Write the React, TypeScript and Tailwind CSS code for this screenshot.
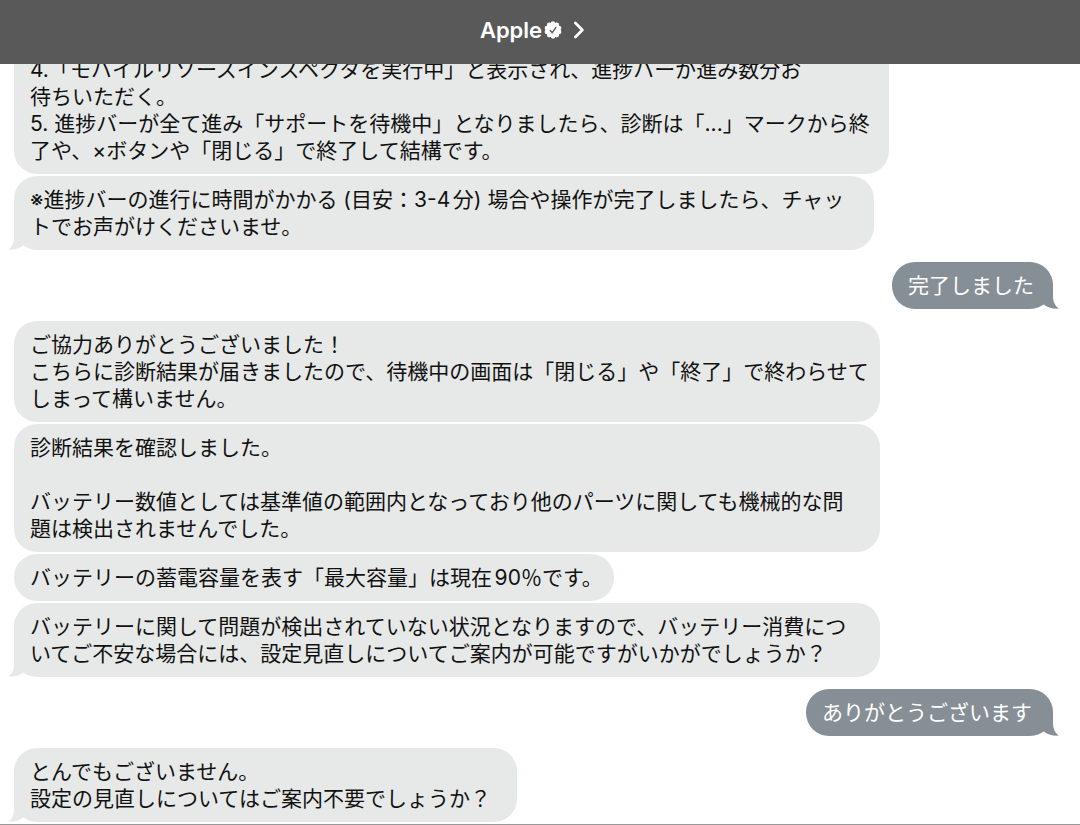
import { ReactNode } from "react";

type Message = {
  from: "apple" | "me";
  lines: string[];
  width: string;
  tail?: boolean;
  continued?: boolean;
};

const groups: Message[][] = [
  [
    {
      from: "apple",
      width: "w-[875px]",
      continued: true,
      lines: [
        "4.「モバイルリソースインスペクタを実行中」と表示され、進捗バーが進み数分お",
        "待ちいただく。",
        "5. 進捗バーが全て進み「サポートを待機中」となりましたら、診断は「...」マークから終",
        "了や、×ボタンや「閉じる」で終了して結構です。",
      ],
    },
    {
      from: "apple",
      width: "w-[860px]",
      tail: true,
      lines: [
        "※進捗バーの進行に時間がかかる (目安：3-4分) 場合や操作が完了しましたら、チャッ",
        "トでお声がけくださいませ。",
      ],
    },
  ],
  [{ from: "me", width: "w-[161px]", tail: true, lines: ["完了しました"] }],
  [
    {
      from: "apple",
      width: "w-[866px]",
      lines: [
        "ご協力ありがとうございました！",
        "こちらに診断結果が届きましたので、待機中の画面は「閉じる」や「終了」で終わらせて",
        "しまって構いません。",
      ],
    },
    {
      from: "apple",
      width: "w-[866px]",
      lines: [
        "診断結果を確認しました。",
        "",
        "バッテリー数値としては基準値の範囲内となっており他のパーツに関しても機械的な問",
        "題は検出されませんでした。",
      ],
    },
    {
      from: "apple",
      width: "w-[600px]",
      lines: ["バッテリーの蓄電容量を表す「最大容量」は現在90％です。"],
    },
    {
      from: "apple",
      width: "w-[866px]",
      tail: true,
      lines: [
        "バッテリーに関して問題が検出されていない状況となりますので、バッテリー消費につ",
        "いてご不安な場合には、設定見直しについてご案内が可能ですがいかがでしょうか？",
      ],
    },
  ],
  [{ from: "me", width: "w-[247px]", tail: true, lines: ["ありがとうございます"] }],
  [
    {
      from: "apple",
      width: "w-[503px]",
      tail: true,
      lines: ["とんでもございません。", "設定の見直しについてはご案内不要でしょうか？"],
    },
  ],
];

function Tail({ side }: { side: "left" | "right" }) {
  return (
    <svg
      viewBox="0 0 26 26"
      aria-hidden="true"
      className={
        side === "left"
          ? "absolute bottom-0 -left-1.5 size-[26px] fill-[#e7e9e8]"
          : "absolute bottom-0 -right-1.5 size-[26px] -scale-x-100 fill-[#878f96]"
      }
    >
      <path d="M6 0 V13 C6 19 4 23 0 25.6 C5 26.2 10.5 25 15 21.8 L18 10 Z" />
    </svg>
  );
}

function Bubble({ message }: { message: Message }) {
  const mine = message.from === "me";
  return (
    <li
      className={`relative max-w-full px-4 py-2.5 ${message.width} ${
        mine ? "self-end bg-[#878f96] text-white" : "self-start bg-[#e7e9e8] text-[#111]"
      } ${message.continued ? "rounded-b-[23px]" : "rounded-[23px]"}`}
    >
      {message.tail && <Tail side={mine ? "right" : "left"} />}
      {message.lines.map((line, i) => (
        <p key={i} className="relative min-h-[27px] whitespace-nowrap">
          {line}
        </p>
      ))}
    </li>
  );
}

function VerifiedBadge() {
  const lobes: ReactNode[] = [];
  for (let i = 0; i < 10; i++) {
    const a = (i / 10) * Math.PI * 2 - Math.PI / 2;
    lobes.push(<circle key={i} cx={9 + Math.cos(a) * 6.3} cy={9 + Math.sin(a) * 6.3} r="2.4" />);
  }
  return (
    <svg viewBox="0 0 18 18" className="ml-0.5 size-[18px] fill-white" role="img" aria-label="認証済み">
      <circle cx="9" cy="9" r="7.3" />
      {lobes}
      <path
        d="M6.2 9.5 L8.2 11.8 L11.9 6.4"
        fill="none"
        stroke="#595959"
        strokeWidth="1.4"
        strokeLinecap="round"
        strokeLinejoin="round"
      />
    </svg>
  );
}

export default function App() {
  return (
    <div className="flex h-screen flex-col bg-white font-['Inter','Noto_Sans_CJK_JP',sans-serif]" lang="ja">
      <header className="flex h-16 shrink-0 items-center justify-center bg-[#595959] pr-4 pb-1">
        <button type="button" className="flex items-center text-[22px] leading-7 font-semibold text-white">
          <span>Apple</span>
          <VerifiedBadge />
          <svg viewBox="0 0 10 18" className="ml-3 h-[18px] w-2.5" aria-hidden="true">
            <path
              d="M1.4 2 L8.4 9 L1.4 16"
              fill="none"
              stroke="white"
              strokeWidth="2.7"
              strokeLinecap="round"
              strokeLinejoin="round"
            />
          </svg>
        </button>
      </header>
      <main className="flex min-h-0 flex-1 flex-col justify-end gap-3 overflow-hidden border-b border-[#999] pr-[27px] pb-0.5 pl-3.5 text-[21px] leading-[27px] [text-autospace:normal]">
        {groups.map((group, i) => (
          <ul key={i} className="flex shrink-0 flex-col gap-0.5">
            {group.map((message, j) => (
              <Bubble key={j} message={message} />
            ))}
          </ul>
        ))}
      </main>
    </div>
  );
}
